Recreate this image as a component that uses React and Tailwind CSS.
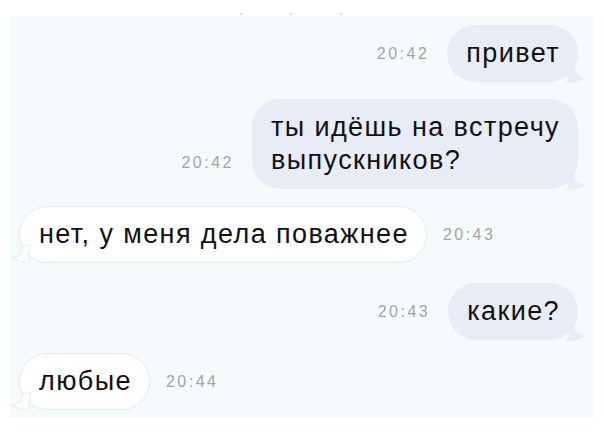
const OutTail = () => (
  <svg className="absolute -right-[8px] bottom-[-1px]" width="20" height="18" viewBox="0 0 20 18">
    <path d="M0 0 C2 8 4 14 0 18 C8 18 14 16 20 13 C12 12 8 8 8 0 Z" fill="#e7ecf6" />
  </svg>
);

const InTail = () => (
  <svg className="absolute -left-[9px] bottom-[-1px]" width="20" height="18" viewBox="0 0 20 18">
    <path d="M20 0 C18 8 16 14 20 18 C12 18 6 16 0 13 C8 12 12 8 12 0 Z" fill="#ffffff" stroke="#e3e8ee" strokeWidth="1" />
  </svg>
);

function Out({ time, children, endTime }) {
  return (
    <div className={`flex justify-end gap-[18px] pr-[16px] ${endTime ? "items-end" : "items-center"}`}>
      <span className={`text-[16px] tracking-[2.5px] text-[#a4a4a4] ${endTime ? "pb-[14px]" : ""}`}>{time}</span>
      <div className="relative rounded-[28px] bg-[#e7ecf6] py-[12px] pl-[19px] pr-[18px] text-[27px] leading-[33px] tracking-[1.4px] text-[#111]">
        {children}
        <OutTail />
      </div>
    </div>
  );
}

function In({ time, children }) {
  return (
    <div className="flex items-center gap-[16px] pl-[9px]">
      <div className="relative rounded-[28px] border border-[#e3e8ee] bg-white py-[11px] pl-[19px] pr-[17px] text-[27px] leading-[33px] tracking-[1.4px] text-[#111]">
        {children}
        <InTail />
      </div>
      <span className="text-[16px] tracking-[2.5px] text-[#a4a4a4]">{time}</span>
    </div>
  );
}

export default function App() {
  return (
    <div className="h-[432px] w-[604px] bg-white px-[10px] pb-[14px] pt-[16px] font-['Liberation_Sans',Arial,sans-serif]">
      <div className="relative flex h-full flex-col bg-[#f5fbfd] pt-[9px]">
        {/* status dots */}
        <div className="absolute -top-[3px] left-[230px] flex gap-[48px]">
          <span className="h-[2px] w-[2px] rounded-full bg-[#c8ccd0]" />
          <span className="h-[2px] w-[2px] rounded-full bg-[#c8ccd0]" />
          <span className="h-[2px] w-[2px] rounded-full bg-[#c8ccd0]" />
        </div>

        <Out time="20:42">привет</Out>

        <div className="mt-[17px]">
          <Out time="20:42" endTime>
            ты идёшь на встречу
            <br />
            выпускников?
          </Out>
        </div>

        <div className="mt-[17px]">
          <In time="20:43">нет, у меня дела поважнее</In>
        </div>

        <div className="mt-[20px]">
          <Out time="20:43">какие?</Out>
        </div>

        <div className="mt-[13px]">
          <In time="20:44">любые</In>
        </div>
      </div>
    </div>
  );
}
